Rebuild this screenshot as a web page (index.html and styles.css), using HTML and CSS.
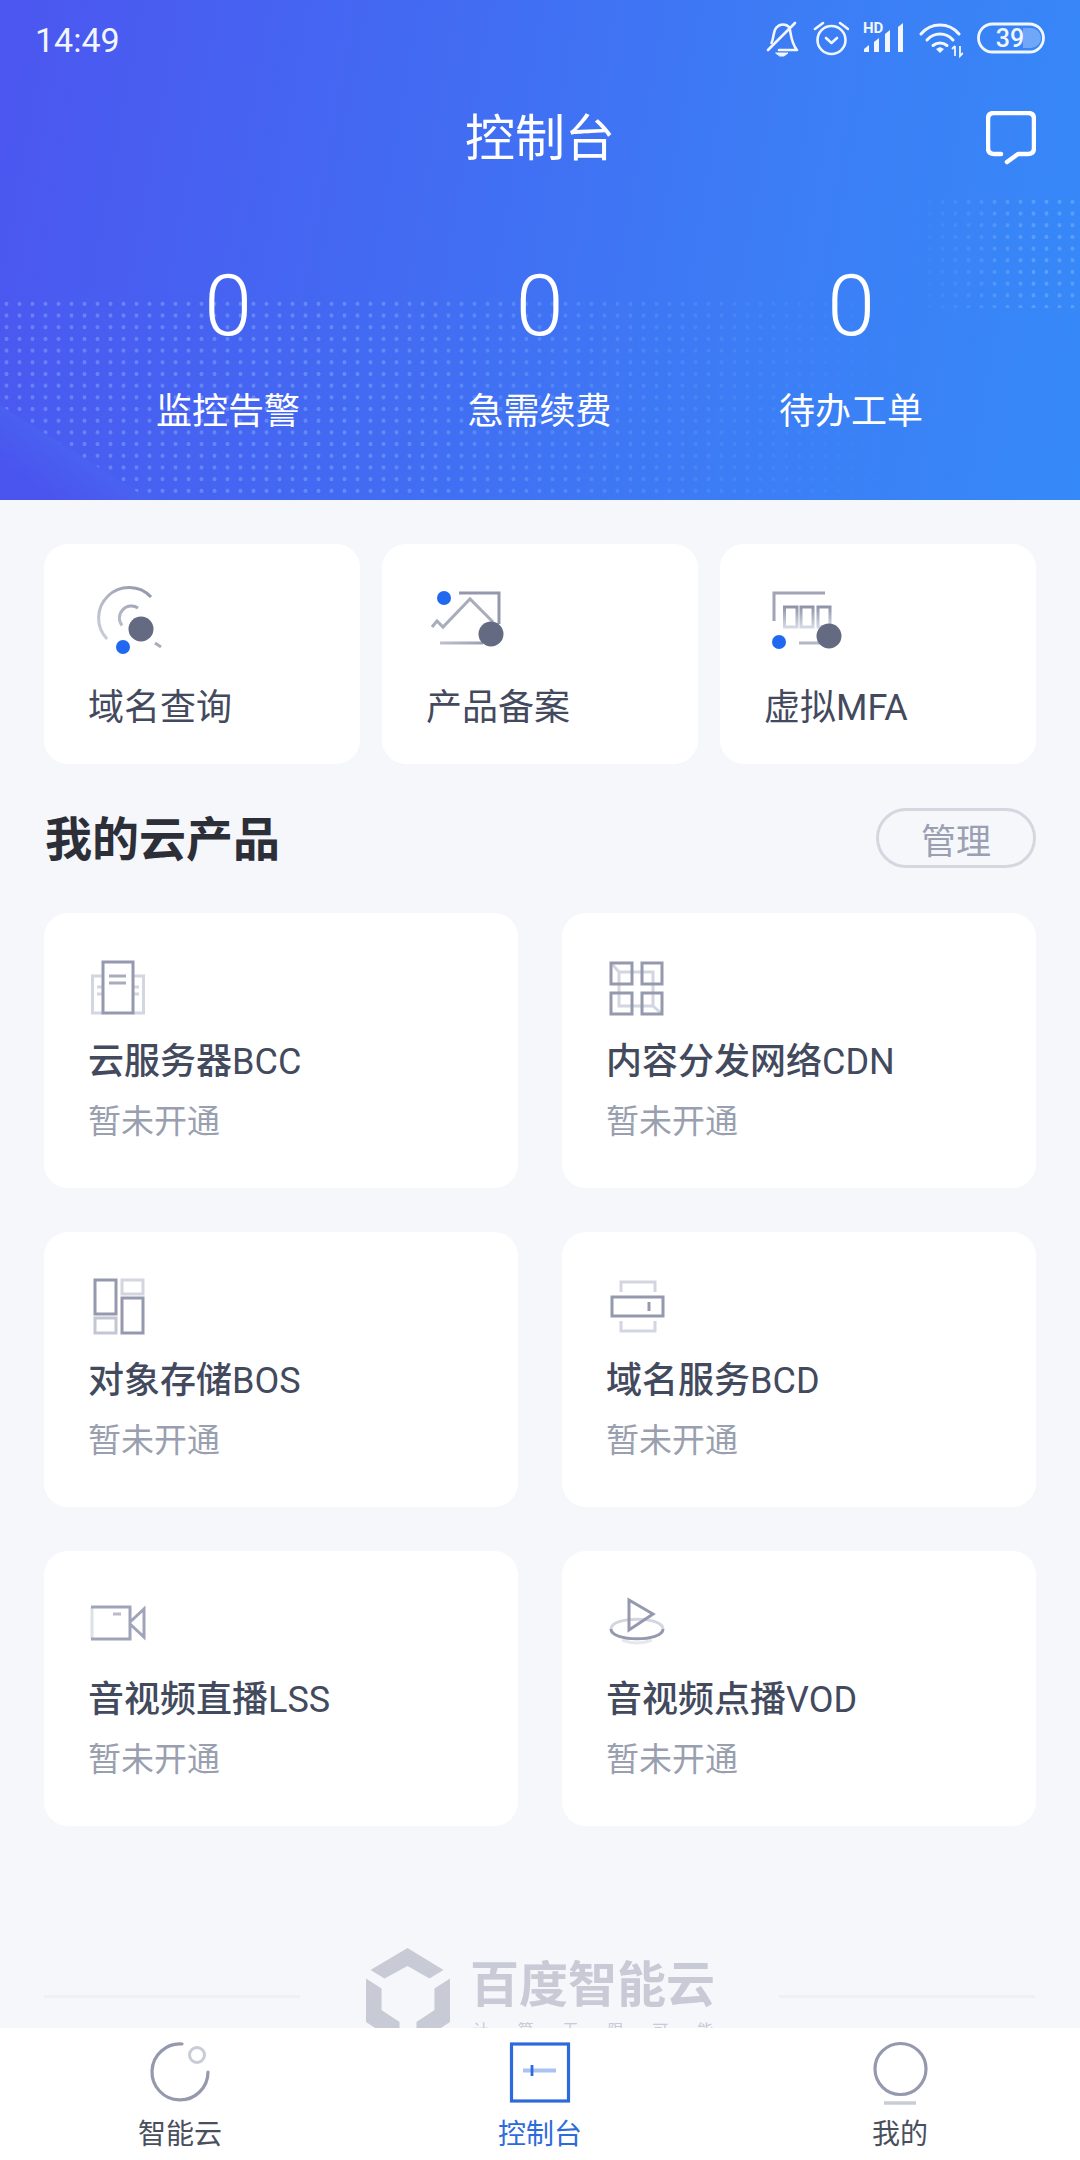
FILE: index.html
```html
<!DOCTYPE html>
<html lang="zh-CN">
<head>
<meta charset="utf-8">
<title>控制台</title>
<link rel="stylesheet" href="styles.css">
</head>
<body>
<svg class="defs" width="0" height="0" aria-hidden="true">
  <defs>
    <linearGradient id="fadeV" x1="0" y1="0" x2="0" y2="1"><stop offset="0" stop-color="#8f94aa"/><stop offset="1" stop-color="#d5d8e2"/></linearGradient>
    <linearGradient id="fadeH" gradientUnits="userSpaceOnUse" x1="5" y1="0" x2="70" y2="0"><stop offset="0" stop-color="#c4c7d3"/><stop offset="1" stop-color="#8f94aa"/></linearGradient>
    <linearGradient id="fadeD" gradientUnits="userSpaceOnUse" x1="5" y1="60" x2="60" y2="5"><stop offset="0" stop-color="#d0d3dd"/><stop offset="1" stop-color="#8f94aa"/></linearGradient>
  </defs>
</svg>
<div class="app">
  <main class="main">
    <header class="hero">
      <div class="dots dots-left"></div>
      <div class="dots dots-right"></div>
      <div class="wedge"></div>
      <div class="statusbar">
        <span class="time">14:49</span>
        <div class="status-icons">
          <svg class="st st-bell" viewBox="0 0 33 40"><g fill="none" stroke="#f1f6ff" stroke-width="2.6" stroke-linecap="round" stroke-linejoin="round"><path d="M5.5 23C8 18 7 11 10.500 7.500C14 3.500 20 3.500 23.500 7.500C25 14 25 23 31 30H13"/><path d="M29 3L2 30"/><path d="M10 33H22L18 36H14Z" fill="#f1f6ff" stroke-width="1"/></g></svg>
          <svg class="st st-alarm" viewBox="0 0 36 40"><g fill="none" stroke="#f1f6ff" stroke-width="2.6" stroke-linecap="round" stroke-linejoin="round"><circle cx="18.500" cy="20" r="14"/><path d="M2 9L10 3M35 9L27 3M13 18L18.500 23L24 18"/></g></svg>
          <svg class="st st-signal" viewBox="0 0 42 40"><text class="hd" x="0" y="13">HD</text><g fill="#f1f6ff"><path d="M1 32V29L6 25V32Z"/><path d="M11 32V22L16 18V32Z"/><path d="M22 32V14L27 10V32Z"/><path d="M35 32V7L40 3V32Z"/></g></svg>
          <svg class="st st-wifi" viewBox="0 0 44 40"><g fill="none" stroke="#f1f6ff" stroke-width="3" stroke-linecap="round"><path d="M2 14C12 2 30 2 40 14"/><path d="M8 20C15 12 27 12 34 20"/><path d="M14 25.500C18 22 24 22 28 25.500"/></g><path d="M17 29L21 27L25 29L21 33Z" fill="#f1f6ff"/><path d="M36 26V36M33 29L36 26M41 26V36L44 33" fill="none" stroke="#f1f6ff" stroke-width="1.800"/></svg>
          <svg class="st st-batt" viewBox="0 0 68 40"><rect x="1.500" y="4" width="65" height="28" rx="14" fill="none" stroke="#f1f6ff" stroke-width="2.800"/><path d="M46 8H54A10 10 0 0 1 54 28H46Z" fill="#fff" fill-opacity=".28"/><text class="batt-num" x="33" y="27">39</text></svg>
        </div>
      </div>
      <div class="titlebar">
        <h1 class="title">控制台</h1>
        <svg class="chat" viewBox="0 0 50 54"><path d="M15 43H8Q2 43 2 37V8Q2 2 8 2H42Q48 2 48 8V37Q48 43 42 43H32L21 51" fill="none" stroke="#fff" stroke-width="4.500" stroke-linecap="round" stroke-linejoin="round"/></svg>
      </div>
      <div class="stats">
        <div class="stat"><div class="stat-num">0</div><div class="stat-label">监控告警</div></div>
        <div class="stat"><div class="stat-num">0</div><div class="stat-label">急需续费</div></div>
        <div class="stat"><div class="stat-num">0</div><div class="stat-label">待办工单</div></div>
      </div>
    </header>

    <section class="quick">
      <a class="qcard">
        <svg class="qicon" viewBox="0 0 90 80"><g fill="none" stroke-width="3"><path d="M62 17A30 30 0 1 0 18 59" stroke="url(#fadeD)"/><path d="M49 28A12 12 0 0 0 33 45.500" stroke="url(#fadeD)"/><path d="M66 63L72 67" stroke="#a8acbc"/></g><circle cx="52" cy="49" r="12.500" fill="#636a82"/><circle cx="34" cy="67" r="7" fill="#2168f0"/></svg>
        <span class="qlabel">域名查询</span>
      </a>
      <a class="qcard">
        <svg class="qicon" viewBox="0 0 90 80"><g fill="none" stroke-width="3"><path d="M32 13H72V44" stroke="#9398ab"/><path d="M5 47L10 41L16 47L43 19L66 42" stroke="#a8acbc"/><path d="M13 63H56" stroke="url(#fadeH)"/></g><circle cx="64" cy="54" r="12.500" fill="#636a82"/><circle cx="17" cy="18" r="7" fill="#2168f0"/></svg>
        <span class="qlabel">产品备案</span>
      </a>
      <a class="qcard">
        <svg class="qicon" viewBox="0 0 90 80"><g fill="none" stroke-width="3"><path d="M9 41V13H60" stroke="#a0a4b6"/><path d="M19.500 27H32V47H19.500Z" stroke="url(#fadeV)"/><path d="M36 27H48V47H36Z" stroke="url(#fadeV)"/><path d="M53 27H65V47H53Z" stroke="url(#fadeV)"/><path d="M34 63H58" stroke="#b3b6c4"/></g><circle cx="64" cy="56" r="12.500" fill="#636a82"/><circle cx="14" cy="62" r="7" fill="#2168f0"/></svg>
        <span class="qlabel">虚拟MFA</span>
      </a>
    </section>

    <div class="section-head">
      <h2 class="section-title">我的云产品</h2>
      <span class="manage">管理</span>
    </div>

    <section class="products">
      <a class="pcard">
        <svg class="picon" viewBox="0 0 70 70"><g fill="none" stroke-width="3"><path d="M14 26H3.500V63H14M44 26H54.500V63H44M8 37H14M8 44H14M44 37H50M44 44H50" stroke="#d3d6e0"/><path d="M14 12H44V63H14Z" stroke="#9499ae"/><path d="M20 26H37M20 33H37" stroke="#a8acbc"/></g></svg>
        <div class="ptitle"><b>云服务器</b>BCC</div>
        <div class="psub">暂未开通</div>
      </a>
      <a class="pcard">
        <svg class="picon" viewBox="0 0 70 70"><g fill="none" stroke-width="3"><path d="M12 22H46V56H12ZM4 13L12 22M46 56L55 64" stroke="#d3d6e0"/><path d="M4 13H25V34H4ZM35 13H55V34H35ZM4 43H25V64H4ZM35 43H55V64H35Z" stroke="#9499ae"/></g></svg>
        <div class="ptitle"><b>内容分发网络</b>CDN</div>
        <div class="psub">暂未开通</div>
      </a>
      <a class="pcard">
        <svg class="picon" viewBox="0 0 70 70"><g fill="none" stroke-width="3"><path d="M6 11H27V45H6ZM33 29H54V64H33Z" stroke="#9499ae"/><path d="M33 11H54V25H33Z" stroke="#d3d6e0"/><path d="M6 49H27V64H6Z" stroke="#c4c7d3"/></g></svg>
        <div class="ptitle"><b>对象存储</b>BOS</div>
        <div class="psub">暂未开通</div>
      </a>
      <a class="pcard">
        <svg class="picon" viewBox="0 0 70 70"><g fill="none" stroke-width="3"><path d="M14 23V13H48V23M14 52V62H48V52" stroke="#d3d6e0"/><path d="M5 28H56V47H5Z" stroke="#9499ae"/><path d="M42 33V42" stroke="#9499ae"/></g></svg>
        <div class="ptitle"><b>域名服务</b>BCD</div>
        <div class="psub">暂未开通</div>
      </a>
      <a class="pcard">
        <svg class="picon" viewBox="0 0 70 70"><g fill="none" stroke-width="3"><path d="M3 19V51" stroke="#dfe1e9"/><path d="M2 19H41V51H2M41 34L55 21V49L41 36" stroke="#9fa4b8"/><path d="M24 26H32" stroke="#b9bcca"/></g></svg>
        <div class="ptitle"><b>音视频直播</b>LSS</div>
        <div class="psub">暂未开通</div>
      </a>
      <a class="pcard">
        <svg class="picon" viewBox="0 0 70 70"><g fill="none" stroke-width="3"><path d="M4 41C4 28 56 28 56 41" stroke="#d3d6e0"/><path d="M15 52Q30 58 45 52" stroke="#e6e8ee"/><path d="M4 41C4 54 56 54 56 41" stroke="#9499ae"/><path d="M22 12L46 26L22 42Z" stroke="#9499ae"/></g></svg>
        <div class="ptitle"><b>音视频点播</b>VOD</div>
        <div class="psub">暂未开通</div>
      </a>
    </section>

    <footer class="brand">
      <div class="rule"></div>
      <svg class="logo" viewBox="0 0 84 100"><path d="M41.500 0L4.500 22L18.500 30.500L41.500 18L63.500 30.500L77.500 22ZM0 30.500L15.500 40.500V62L33.500 74V96L0 74ZM84 30.500L68.500 40.500V62L50.500 74V96L84 74Z" fill="#c8cad6"/></svg>
      <div class="brand-text">
        <div class="brand-name">百度智能云</div>
        <div class="brand-sub"><span>计</span><span>算</span><span>无</span><span>限</span><span>可</span><span>能</span></div>
      </div>
      <div class="rule"></div>
    </footer>
  </main>

  <nav class="tabs">
    <a class="tab">
      <svg class="ticon" viewBox="0 0 70 70"><path d="M37 4A28 28 0 1 0 63 32" fill="none" stroke="#9499ae" stroke-width="3.200" stroke-linecap="round"/><circle cx="52" cy="15" r="7.500" fill="none" stroke="#c9ccd7" stroke-width="3"/></svg>
      <span class="tlabel">智能云</span>
    </a>
    <a class="tab tab-active">
      <svg class="ticon" viewBox="0 0 70 70"><rect x="6.500" y="4" width="57" height="57" fill="none" stroke="#2d6bdc" stroke-width="3.200"/><path d="M18 30.500H51" stroke="#a9c3f2" stroke-width="4"/><path d="M27 25V36" stroke="#2d6bdc" stroke-width="2.800"/></svg>
      <span class="tlabel">控制台</span>
    </a>
    <a class="tab">
      <svg class="ticon" viewBox="0 0 70 70"><circle cx="35.500" cy="29" r="25.500" fill="none" stroke="#9499ae" stroke-width="3.200"/><path d="M19 63H51" stroke="#c9ccd7" stroke-width="3.500"/></svg>
      <span class="tlabel">我的</span>
    </a>
  </nav>
</div>
</body>
</html>
```
FILE: styles.css
```css
* { box-sizing: border-box; }
html, body { margin: 0; padding: 0; }
body {
  width: 1080px;
  height: 2160px;
  overflow: hidden;
  font-family: Roboto, "Noto Sans CJK SC", sans-serif;
  background: #f5f7fb;
  color: #3f4658;
}
.defs { position: absolute; }
.app { display: flex; flex-direction: column; height: 2160px; }
.main { flex: 1; min-height: 0; overflow: hidden; }

/* hero */
.hero {
  position: relative;
  height: 500px;
  overflow: hidden;
  background: linear-gradient(100deg, #4c56f0 0%, #4369f2 35%, #3c7df5 70%, #3689f8 100%);
  color: #fff;
}
.dots {
  position: absolute;
  background-image: radial-gradient(circle at center, rgba(150, 195, 255, .38) 1.7px, transparent 2.3px);
  background-size: 13px 11.7px;
}
.dots-left {
  left: 0; top: 298px; width: 920px; height: 202px;
  -webkit-mask-image: linear-gradient(90deg, #000 40%, transparent 100%);
  mask-image: linear-gradient(90deg, #000 40%, transparent 100%);
}
.dots-right {
  right: 0; top: 196px; width: 170px; height: 112px;
  -webkit-mask-image: linear-gradient(90deg, transparent, #000 70%);
  mask-image: linear-gradient(90deg, transparent, #000 70%);
}
.wedge {
  position: absolute;
  left: 0; bottom: 0;
  width: 150px; height: 95px;
  clip-path: polygon(0 0, 100% 100%, 0 100%);
  background: linear-gradient(35deg, #4a55ef 20%, #4872f3 90%);
}
.statusbar, .titlebar, .stats { position: relative; }
.statusbar {
  height: 80px;
  padding: 0 35px 0 35px;
  display: flex;
  align-items: center;
  justify-content: space-between;
}
.time { font-size: 34px; font-weight: 400; color: #f1f6ff; }
.status-icons { display: flex; align-items: center; gap: 14px; }
.st { height: 40px; display: block; }
.st-bell { width: 33px; }
.st-alarm { width: 36px; }
.st-signal { width: 42px; }
.st-wifi { width: 44px; }
.st-batt { width: 68px; }
.hd { font: 700 15px Roboto, sans-serif; fill: #f1f6ff; }
.batt-num { font: 500 25px Roboto, sans-serif; fill: #f1f6ff; text-anchor: middle; }

.titlebar { height: 116px; display: flex; align-items: center; justify-content: center; padding-top: 2px; }
.title { margin: 0; font-size: 50px; font-weight: 400; line-height: 1; }
.chat { position: absolute; right: 44px; top: 31px; width: 50px; height: 54px; }

.stats { display: grid; grid-template-columns: 311px 312px 311px; justify-content: center; padding: 67px 1px 0 0; }
.stat { text-align: center; }
.stat-num { font-size: 86px; font-weight: 300; line-height: 86px; }
.stat-label { margin-top: 38px; font-size: 36px; line-height: 50px; }

/* quick entries */
.quick { display: flex; gap: 22px; padding: 44px 44px 0; }
.qcard {
  flex: 1;
  height: 220px;
  background: #fff;
  border-radius: 24px;
  padding: 36px 0 0 45px;
  display: flex;
  flex-direction: column;
}
.qicon { width: 90px; height: 80px; display: block; }
.qlabel { margin: 22px 0 0 -1px; font-size: 36px; line-height: 52px; color: #444a5e; }

/* section head */
.section-head {
  display: flex;
  align-items: center;
  justify-content: space-between;
  padding: 44px 44px 0 45px;
}
.section-title { margin: 0; padding-top: 3px; font-size: 47px; font-weight: 700; line-height: 57px; color: #2c2f38; }
.manage {
  width: 160px;
  height: 60px;
  border: 3px solid #d5d7e0;
  border-radius: 30px;
  display: flex;
  align-items: center;
  justify-content: center;
  font-size: 35px;
  color: #9a9fb2;
}

/* products */
.products {
  display: grid;
  grid-template-columns: 474px 474px;
  grid-auto-rows: 275px;
  column-gap: 44px;
  row-gap: 44px;
  padding: 45px 44px 0;
}
.pcard { background: #fff; border-radius: 24px; padding: 37px 0 0 45px; }
.picon { width: 70px; height: 70px; display: block; }
.ptitle { margin: 18px 0 0 -1px; font-size: 36px; line-height: 48px; color: #434a5e; }
.ptitle b { font-weight: 500; }
.psub { margin: 13px 0 0 -1px; font-size: 33px; line-height: 46px; color: #9a9fb0; }

/* brand footer */
.brand {
  display: flex;
  align-items: flex-start;
  padding: 122px 44px 0;
}
.rule { width: 256px; height: 3px; margin-top: 47px; background: #eef0f5; }
.logo { width: 84px; height: 100px; margin-left: 66px; display: block; flex: none; }
.brand-text { width: 240px; margin: 14px 66px 0 23px; }
.brand-name { margin-left: -3px; font-size: 49px; font-weight: 700; line-height: 48px; color: #c8cad6; white-space: nowrap; }
.brand-sub { display: flex; justify-content: space-between; margin-top: 11px; font-size: 16px; line-height: 20px; color: #c8cad6; }

/* tabs */
.tabs { height: 132px; flex: none; display: grid; grid-template-columns: 360px 360px 360px; background: #fff; }
.tab { display: flex; flex-direction: column; align-items: center; padding-top: 12px; color: #4a4f5e; }
.tab-active { color: #2d6bdc; }
.ticon { width: 70px; height: 70px; display: block; }
.tlabel { margin-top: 5px; font-size: 28px; line-height: 40px; }
```
